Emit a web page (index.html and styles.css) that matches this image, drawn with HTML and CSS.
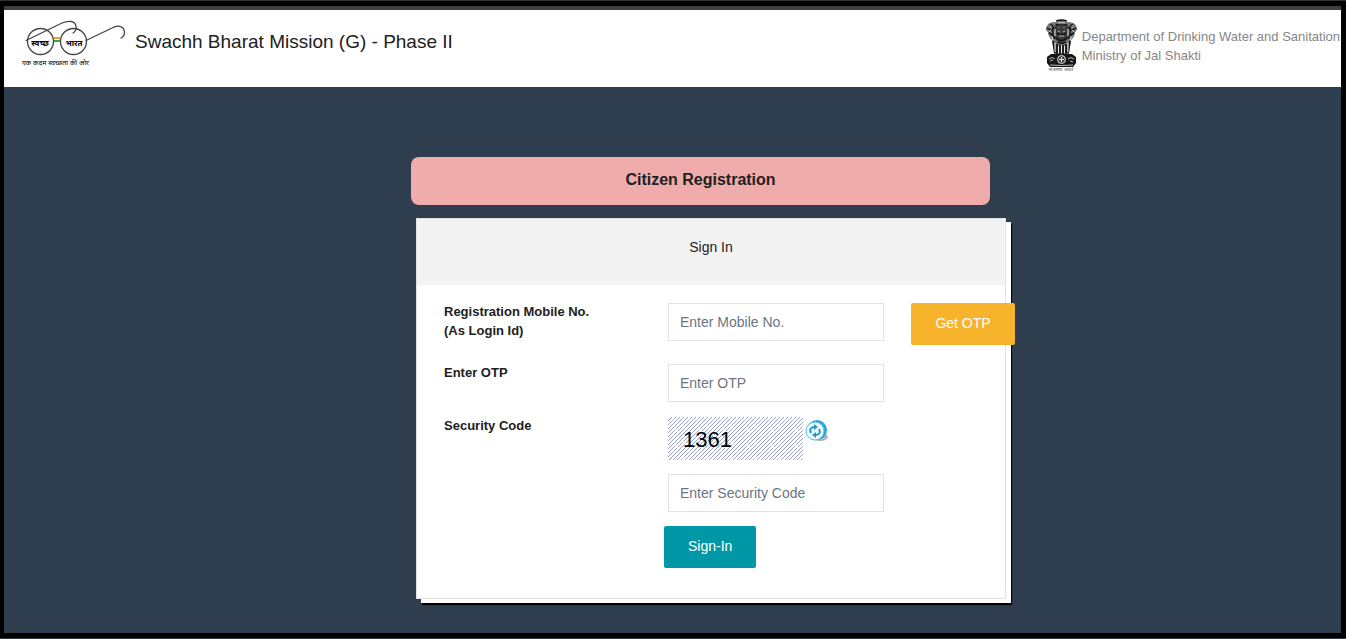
FILE: index.html
```html
<!DOCTYPE html>
<html lang="en">
<head>
    <meta charset="UTF-8">
    <meta name="viewport" content="width=device-width, initial-scale=1.0">
    <title>Citizen Registration</title>
    <link rel="stylesheet" href="styles.css">
</head>
<body>
    <header class="header">
        <div class="brand">
            <svg class="logo" width="106" height="50" viewBox="0 0 106 50" role="img" aria-label="Swachh Bharat">
                <g fill="none" stroke="#444" stroke-width="1.3" stroke-linecap="round">
                    <circle cx="18.500" cy="22.500" r="13"/>
                    <circle cx="51.500" cy="22.500" r="13"/>
                    <path d="M4 21.500 L40 4 C47 1 53 2 54 7 C55 10 53 13 51 14"/>
                    <path d="M64 21.500 L90 9 C97 5 102 8 102.500 13 C102.500 16 101 18 99 19"/>
                </g>
                <path d="M32 18h6v2h-6z" fill="#f39a2d"/>
                <path d="M32 21h6v2h-6z" fill="#2fa84f"/>
                <text class="logo-word" x="18" y="27" text-anchor="middle">स्वच्छ</text>
                <text class="logo-word" x="52" y="27" text-anchor="middle">भारत</text>
                <text class="logo-motto" x="0" y="46">एक कदम स्वच्छता की ओर</text>
            </svg>
            <h1 class="title">Swachh Bharat Mission (G) - Phase II</h1>
        </div>
        <div class="department">
            <svg class="emblem" width="34" height="54" viewBox="0 0 34 54" role="img" aria-label="Emblem of India">
                <!-- lions -->
                <path d="M12 3 C13 0 22 0 23 3 C28 3 31 4 32 7 C34 9 33 12 31 13 C31 17 29 19 27 21 L25 35 H10 L8 21 C6 19 4 17 4 13 C2 12 1 9 3 7 C4 4 7 3 12 3Z" fill="#777"/>
                <path d="M12 5 C9 9 9 16 12 21 L17.500 25 L23 21 C26 16 26 9 23 5Z" fill="#3c3c3c"/>
                <g fill="none" stroke="#111" stroke-width="1.3">
                    <path d="M12 2q5-2 11 0M12 6q5-3 11 0M10 8q-3 6 1 12M25 8q3 6-1 12M6 5q5 2 2 7M29 5q-5 2-2 7M3 9l4 2-2 2M32 9l-4 2 2 2M5 14q4 1 4 6M30 14q-4 1-4 6M13 14q4 4 9 0M12 19q5 5 11 0M13 23q4 3 9 0"/>
                    <path d="M9 22l2 12M13 25v10M16 26v9M19 26v9M22 25v10M26 22l-2 12" stroke-width="1.700"/>
                </g>
                <path d="M14 4h7M11 10v7M24 10v7M7 11l-2 2M28 11l2 2M8 17l1 4M27 17l-1 4M11 24v9M14.500 27v7M17.500 26v8M20.500 27v7M24 24v9" fill="none" stroke="#eee" stroke-width="1"/>
                <path d="M15 8v1M20 8v1M14 12l2 1M21 12l-2 1M15 17h5M6 8h1M28 8h1" fill="none" stroke="#bbb" stroke-width="1"/>
                <!-- abacus with wheel -->
                <path d="M7 35 H28 L32 38 V44 L29 48 H6 L3 44 V38Z" fill="#161616"/>
                <circle cx="17.500" cy="40.500" r="4" fill="#444" stroke="#ddd" stroke-width="1"/>
                <path d="M17.500 38v5M15 40.500h5" stroke="#ddd" stroke-width="1"/>
                <path d="M5 40q3-3 6 0M24 40q3-3 6 0M6 42l3-1M26 42l3 1M6 46q12 1 23 0" fill="none" stroke="#bbb" stroke-width="1"/>
                <text class="emblem-motto" x="17" y="52" text-anchor="middle">सत्यमेव जयते</text>
            </svg>
            <p class="department-name">Department of Drinking Water and Sanitation<br>Ministry of Jal Shakti</p>
        </div>
    </header>

    <main class="main">
        <div class="panel">
            <h2 class="banner">Citizen Registration</h2>
            <section class="card">
                <h3 class="card-header">Sign In</h3>
                <form class="form">
                    <div class="row row-mobile">
                        <label for="mobile">Registration Mobile No.<br>(As Login Id)</label>
                        <input class="field" type="text" id="mobile" placeholder="Enter Mobile No.">
                        <button class="btn btn-otp" type="button">Get OTP</button>
                    </div>
                    <div class="row row-otp">
                        <label for="otp">Enter OTP</label>
                        <input class="field" type="text" id="otp" placeholder="Enter OTP">
                    </div>
                    <div class="row">
                        <label for="code">Security Code</label>
                        <div class="captcha">
                            <svg class="captcha-image" width="135" height="43">
                                <defs>
                                    <pattern id="hatch" width="4" height="4" patternUnits="userSpaceOnUse">
                                        <path d="M-1 5L5 -1M-1 1L1 -1M3 5L5 3" stroke="#9a9fbe" stroke-width="1"/>
                                    </pattern>
                                    <pattern id="breaks" width="24" height="16" patternUnits="userSpaceOnUse">
                                        <path d="M3 2h3v3M14 9h3v3M20 1l3 3M7 12l3 3" stroke="#fff" fill="none" stroke-width="1"/>
                                    </pattern>
                                </defs>
                                <rect width="135" height="43" fill="#fff"/>
                                <rect width="135" height="43" fill="url(#hatch)"/>
                                <rect width="135" height="43" fill="url(#breaks)"/>
                                <text class="captcha-text" x="15" y="30">1361</text>
                            </svg>
                            <button class="refresh" type="button" aria-label="Refresh security code">
                                <svg width="24" height="24" viewBox="0 0 24 24">
                                    <ellipse cx="15" cy="18" rx="8" ry="4" fill="#b5b5b5"/>
                                    <circle cx="12" cy="11" r="10" fill="#2ba6dc"/>
                                    <circle cx="10" cy="12" r="9" fill="#f4fbff" stroke="#58bce8" stroke-width="1"/>
                                    <g fill="none" stroke="#1b9ad6" stroke-width="2">
                                        <path d="M6 14C4 10 6 8 10 8"/>
                                        <path d="M14 10C16 14 14 16 10 16"/>
                                    </g>
                                    <path d="M9 5l4 3-4 3zM11 13l-4 3 4 3z" fill="#1b9ad6"/>
                                </svg>
                            </button>
                        </div>
                    </div>
                    <div class="row">
                        <input class="field field-code" type="text" id="code" placeholder="Enter Security Code">
                    </div>
                    <button class="btn btn-signin" type="submit">Sign-In</button>
                </form>
            </section>
        </div>
    </main>
</body>
</html>
```

FILE: styles.css
```css
* {
    box-sizing: border-box;
}
html {
    border-top: 1px solid #303333;
    border-bottom: 1px solid #2f3e4e;
    background-color: #2f3e4e;
}
body {
    margin: 0;
    min-height: calc(100vh - 2px);
    border: solid #000;
    border-width: 5px 5px 5px 4px;
    font-family: "Liberation Sans", Arial, sans-serif;
    color: #212121;
}
h1, h2, h3, p {
    margin: 0;
}

/* header */
.header {
    display: flex;
    justify-content: space-between;
    align-items: flex-start;
    height: 81px;
    padding: 9px 1px 0 18px;
    border-top: 4px solid #3f3f3f;
    background-color: #fff;
}
.brand, .department {
    display: flex;
    align-items: flex-start;
}
.brand {
    gap: 7px;
}
.department {
    gap: 4px;
}
.title {
    padding-top: 11px;
    font-size: 19px;
    line-height: 24px;
    font-weight: normal;
}
.department-name {
    padding-top: 8px;
    font-size: 13px;
    line-height: 19px;
    color: #868686;
}
.logo-word {
    font: bold 8px "Noto Sans Devanagari", "Noto Sans", sans-serif;
}
.logo-motto {
    font: 7px "Noto Sans Devanagari", "Noto Sans", sans-serif;
}
.emblem-motto {
    font: 5px "Noto Sans Devanagari", "Noto Sans", sans-serif;
    fill: #555;
}

/* sign in panel */
.main {
    display: grid;
    grid-template-columns: 412fr minmax(0, 590fr) 335fr;
    padding: 70px 0 34px;
}
.panel {
    grid-column: 2;
}
.banner {
    margin: 0 16px 13px -5px;
    padding: 12px 0 14px;
    border-radius: 8px;
    background-color: #f0abab;
    font-size: 16px;
    line-height: 22px;
    text-align: center;
}
.card {
    border: 1px solid #e2e2e2;
    background-color: #fff;
    box-shadow: 5px 4px 0 #fff, 6px 6px 1px #000;
}
.card-header {
    padding: 18px 0 28px;
    background-color: #f3f3f3;
    font-size: 14px;
    line-height: 20px;
    font-weight: normal;
    text-align: center;
}
.form {
    padding: 18px 0 30px 27px;
}
.row {
    display: grid;
    grid-template-columns: 224px 243px 104px;
    align-items: start;
    margin-bottom: 14px;
}
.row-mobile {
    min-height: 47px;
}
.row-otp {
    min-height: 39px;
}
label {
    margin-top: -1px;
    font-size: 13px;
    line-height: 19px;
    font-weight: bold;
}
.field {
    width: 216px;
    height: 38px;
    padding: 0 11px;
    border: 1px solid #e2e2e2;
    background-color: #fff;
    font: 14px "Liberation Sans", Arial, sans-serif;
}
.field::placeholder {
    color: #6c757d;
}
.field-code {
    grid-column: 2;
}
.btn {
    height: 42px;
    padding: 0 24px 2px;
    border: 0;
    border-radius: 2px;
    font: 14px "Liberation Sans", Arial, sans-serif;
    color: #fff;
    white-space: nowrap;
    cursor: pointer;
}
.btn-otp {
    background-color: #f8b32d;
}
.btn-signin {
    display: block;
    margin-left: 220px;
    background-color: #0098a6;
}
.captcha {
    display: flex;
    align-items: flex-start;
    gap: 2px;
}
.captcha-text {
    font: 22px "Liberation Sans", Arial, sans-serif;
}
.refresh {
    display: flex;
    padding: 2px 0 0;
    border: 0;
    background: none;
    cursor: pointer;
}
```
